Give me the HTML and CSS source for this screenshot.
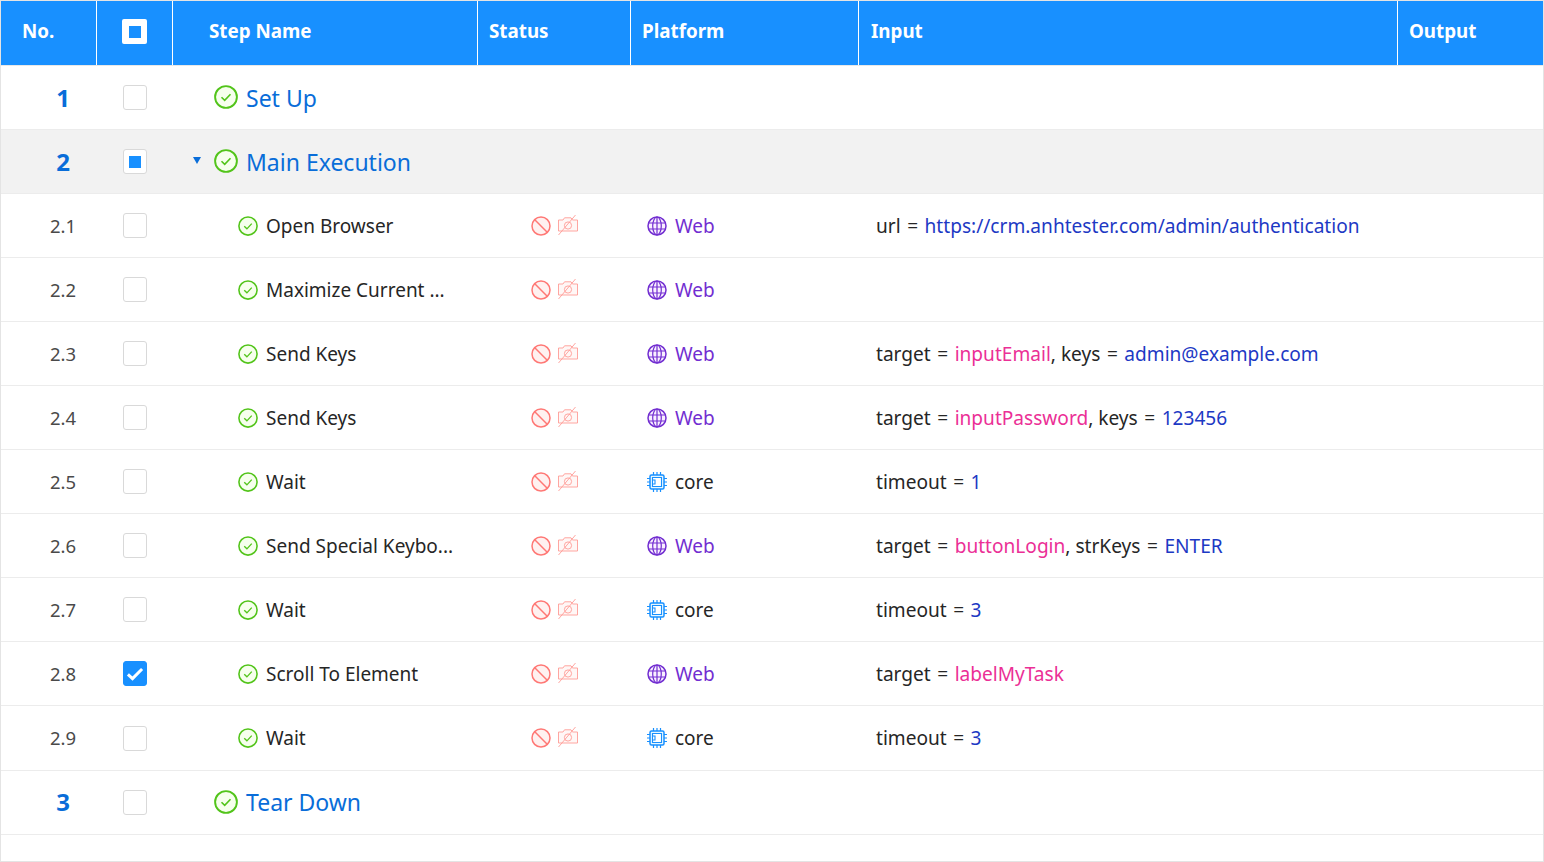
FILE: index.html
```html
<!DOCTYPE html>
<html lang="en">
<head>
<meta charset="utf-8">
<title>Steps</title>
<link rel="stylesheet" href="styles.css">
</head>
<body>
<svg class="defs" width="0" height="0" aria-hidden="true">
  <symbol id="ok" viewBox="0 0 24 24"><circle cx="12" cy="12" r="10.9" fill="#f6ffed" stroke="#52c41a" stroke-width="1.9"/><path d="M7.500 12.200l3.200 3.200 5.800-6.200" fill="none" stroke="#52c41a" stroke-width="1.600"/></symbol>
  <symbol id="ban" viewBox="0 0 20 20"><circle cx="10" cy="10" r="9" fill="#fff1f0" stroke="#ff7875" stroke-width="1.500"/><path d="M3.800 3.800l12.400 12.400" stroke="#ff7875" stroke-width="1.500"/></symbol>
  <symbol id="cam" viewBox="0 0 20 20" fill="none" stroke="#ff9c96" stroke-width=".9"><path d="M.5 5h4.500l1.500-2.200h6.500L14.500 5h5v11H.5z" fill="#fff7f6"/><circle cx="10" cy="10.500" r="3.600"/><path d="M17.500 0L.5 20"/></symbol>
  <symbol id="globe" viewBox="0 0 20 20" fill="none" stroke="#722ed1" stroke-width="1.200"><circle cx="10" cy="10" r="9" fill="#f9f0ff" stroke-width="1.500"/><ellipse cx="10" cy="10" rx="4.300" ry="9"/><path d="M10 1v18M1.500 7h17M1.500 13h17"/></symbol>
  <symbol id="chip" viewBox="0 0 20 20" fill="none" stroke="#1890ff"><rect x="3" y="3" width="14" height="14" rx="1.500" fill="#e6f7ff" stroke-width="1.500"/><path d="M5.500 5.500h9v9h-9zM5.500 8h2.500v4H5.500" fill="#fff" stroke-width="1.100"/><path d="M6.500 0v3M10 0v3M13.500 0v3M6.500 17v3M10 17v3M13.500 17v3M0 6.500h3M0 10h3M0 13.500h3M17 6.500h3M17 10h3M17 13.500h3" stroke-width="1.200"/></symbol>
</svg>
<main class="table">
  <div class="row head">
    <div class="c no">No.</div>
    <div class="c sel"><span class="hbox"><i></i></span></div>
    <div class="c name">Step Name</div>
    <div class="c status">Status</div>
    <div class="c plat">Platform</div>
    <div class="c input">Input</div>
    <div class="c output">Output</div>
  </div>

  <div class="row group">
    <div class="c no">1</div>
    <div class="c sel"><span class="box"></span></div>
    <div class="c name"><svg class="ok-lg"><use href="#ok"/></svg><span class="label">Set Up</span></div>
    <div class="c status"></div><div class="c plat"></div><div class="c input"></div><div class="c output"></div>
  </div>

  <div class="row group active">
    <div class="c no">2</div>
    <div class="c sel"><span class="box part"><i></i></span></div>
    <div class="c name"><span class="caret"></span><svg class="ok-lg"><use href="#ok"/></svg><span class="label">Main Execution</span></div>
    <div class="c status"></div><div class="c plat"></div><div class="c input"></div><div class="c output"></div>
  </div>

  <div class="row step">
    <div class="c no">2.1</div>
    <div class="c sel"><span class="box"></span></div>
    <div class="c name"><svg class="ok-sm"><use href="#ok"/></svg><span>Open Browser</span></div>
    <div class="c status"><svg class="ban"><use href="#ban"/></svg><svg class="cam"><use href="#cam"/></svg></div>
    <div class="c plat"><svg class="pi"><use href="#globe"/></svg><span class="web">Web</span></div>
    <div class="c input">url<span class="eq">=</span><span class="val">https://crm.anhtester.com/admin/authentication</span></div>
    <div class="c output"></div>
  </div>

  <div class="row step">
    <div class="c no">2.2</div>
    <div class="c sel"><span class="box"></span></div>
    <div class="c name"><svg class="ok-sm"><use href="#ok"/></svg><span>Maximize Current ...</span></div>
    <div class="c status"><svg class="ban"><use href="#ban"/></svg><svg class="cam"><use href="#cam"/></svg></div>
    <div class="c plat"><svg class="pi"><use href="#globe"/></svg><span class="web">Web</span></div>
    <div class="c input"></div>
    <div class="c output"></div>
  </div>

  <div class="row step">
    <div class="c no">2.3</div>
    <div class="c sel"><span class="box"></span></div>
    <div class="c name"><svg class="ok-sm"><use href="#ok"/></svg><span>Send Keys</span></div>
    <div class="c status"><svg class="ban"><use href="#ban"/></svg><svg class="cam"><use href="#cam"/></svg></div>
    <div class="c plat"><svg class="pi"><use href="#globe"/></svg><span class="web">Web</span></div>
    <div class="c input">target<span class="eq">=</span><span class="ref">inputEmail</span>,&nbsp;keys<span class="eq">=</span><span class="val">admin@example.com</span></div>
    <div class="c output"></div>
  </div>

  <div class="row step">
    <div class="c no">2.4</div>
    <div class="c sel"><span class="box"></span></div>
    <div class="c name"><svg class="ok-sm"><use href="#ok"/></svg><span>Send Keys</span></div>
    <div class="c status"><svg class="ban"><use href="#ban"/></svg><svg class="cam"><use href="#cam"/></svg></div>
    <div class="c plat"><svg class="pi"><use href="#globe"/></svg><span class="web">Web</span></div>
    <div class="c input">target<span class="eq">=</span><span class="ref">inputPassword</span>,&nbsp;keys<span class="eq">=</span><span class="val">123456</span></div>
    <div class="c output"></div>
  </div>

  <div class="row step">
    <div class="c no">2.5</div>
    <div class="c sel"><span class="box"></span></div>
    <div class="c name"><svg class="ok-sm"><use href="#ok"/></svg><span>Wait</span></div>
    <div class="c status"><svg class="ban"><use href="#ban"/></svg><svg class="cam"><use href="#cam"/></svg></div>
    <div class="c plat"><svg class="pi"><use href="#chip"/></svg><span>core</span></div>
    <div class="c input">timeout<span class="eq">=</span><span class="val">1</span></div>
    <div class="c output"></div>
  </div>

  <div class="row step">
    <div class="c no">2.6</div>
    <div class="c sel"><span class="box"></span></div>
    <div class="c name"><svg class="ok-sm"><use href="#ok"/></svg><span>Send Special Keybo...</span></div>
    <div class="c status"><svg class="ban"><use href="#ban"/></svg><svg class="cam"><use href="#cam"/></svg></div>
    <div class="c plat"><svg class="pi"><use href="#globe"/></svg><span class="web">Web</span></div>
    <div class="c input">target<span class="eq">=</span><span class="ref">buttonLogin</span>,&nbsp;strKeys<span class="eq">=</span><span class="val">ENTER</span></div>
    <div class="c output"></div>
  </div>

  <div class="row step">
    <div class="c no">2.7</div>
    <div class="c sel"><span class="box"></span></div>
    <div class="c name"><svg class="ok-sm"><use href="#ok"/></svg><span>Wait</span></div>
    <div class="c status"><svg class="ban"><use href="#ban"/></svg><svg class="cam"><use href="#cam"/></svg></div>
    <div class="c plat"><svg class="pi"><use href="#chip"/></svg><span>core</span></div>
    <div class="c input">timeout<span class="eq">=</span><span class="val">3</span></div>
    <div class="c output"></div>
  </div>

  <div class="row step">
    <div class="c no">2.8</div>
    <div class="c sel"><span class="box on"><svg viewBox="0 0 24 24"><path d="M3.500 12.500l5.500 5 11.500-11.500" fill="none" stroke="#fff" stroke-width="3.600"/></svg></span></div>
    <div class="c name"><svg class="ok-sm"><use href="#ok"/></svg><span>Scroll To Element</span></div>
    <div class="c status"><svg class="ban"><use href="#ban"/></svg><svg class="cam"><use href="#cam"/></svg></div>
    <div class="c plat"><svg class="pi"><use href="#globe"/></svg><span class="web">Web</span></div>
    <div class="c input">target<span class="eq">=</span><span class="ref">labelMyTask</span></div>
    <div class="c output"></div>
  </div>

  <div class="row step tall">
    <div class="c no">2.9</div>
    <div class="c sel"><span class="box"></span></div>
    <div class="c name"><svg class="ok-sm"><use href="#ok"/></svg><span>Wait</span></div>
    <div class="c status"><svg class="ban"><use href="#ban"/></svg><svg class="cam"><use href="#cam"/></svg></div>
    <div class="c plat"><svg class="pi"><use href="#chip"/></svg><span>core</span></div>
    <div class="c input">timeout<span class="eq">=</span><span class="val">3</span></div>
    <div class="c output"></div>
  </div>

  <div class="row group last">
    <div class="c no">3</div>
    <div class="c sel"><span class="box"></span></div>
    <div class="c name"><svg class="ok-lg"><use href="#ok"/></svg><span class="label">Tear Down</span></div>
    <div class="c status"></div><div class="c plat"></div><div class="c input"></div><div class="c output"></div>
  </div>
</main>
</body>
</html>
```

FILE: styles.css
```css
* { box-sizing: border-box; }
html, body { margin: 0; padding: 0; height: 100%; overflow: hidden; background: #fff; }
.defs { display: block; height: 0; }
.table {
  height: 862px;
  border: 1px solid #e4e4e4;
  font-family: "Noto Sans", "Open Sans", sans-serif;
  font-size: 19px;
  color: #262626;
}
.row {
  display: grid;
  grid-template-columns: 96px 76px 305px 153px 228px 539px 1fr;
  height: 64px;
  border-bottom: 1px solid #ececec;
}
.head { height: 65px; }
.tall { height: 65px; }
.c { display: flex; align-items: center; min-width: 0; white-space: nowrap; }
.no { justify-content: center; padding-left: 28px; }
.sel { justify-content: center; padding-right: 1px; }
.head { background: #1890ff; color: #fff; font-weight: 700; font-size: 18.800px; border-bottom-color: #e8e8e8; }
.head .c { border-right: 1px solid #fff; padding-bottom: 5px; }
.head .c:last-child { border-right: 0; }
.head .no { justify-content: flex-start; padding-left: 21px; }
.head .name { padding-left: 36px; }
.head .status { padding-left: 11px; }
.head .plat { padding-left: 11px; }
.head .input { padding-left: 12px; }
.head .output { padding-left: 11px; }
.hbox { width: 25px; height: 25px; background: #fff; border-radius: 2px; display: flex; align-items: center; justify-content: center; margin: 2px 0 0 1px; }
.hbox i { width: 12px; height: 12px; background: #1890ff; }
.box { width: 24px; height: 25px; background: #fff; border: 1px solid #d9d9d9; border-radius: 3px; display: flex; align-items: center; justify-content: center; margin-left: 1px; }
.box.part i { width: 12px; height: 12px; background: #1890ff; }
.box.on { background: #1890ff; border-color: #1890ff; }
.box.on svg { width: 20px; height: 20px; }
.group { color: #096dd9; font-size: 23px; }
.group .no { font-weight: 700; font-size: 24px; }
.group .name { padding-left: 41px; position: relative; }
.active { background: #f2f2f2; }
.caret {
  position: absolute; left: 20px; top: 27px;
  border-left: 4px solid transparent; border-right: 4px solid transparent; border-top: 7px solid #096dd9;
}
.ok-lg { width: 24px; height: 24px; margin-right: 8px; margin-bottom: 2px; flex: none; }
.ok-sm { width: 20px; height: 20px; margin-right: 8px; flex: none; }
.step .no { color: #4a4a4a; font-size: 18.500px; }
.tall .no { padding-bottom: 1px; }
.last .no { padding-bottom: 2px; }
.last .label { margin-bottom: 2px; }
.step .name { padding-left: 65px; }
.step .status { padding-left: 53px; }
.ban { width: 20px; height: 20px; flex: none; }
.cam { width: 22px; height: 20px; margin-left: 6px; margin-top: -2px; flex: none; }
.step .plat { padding-left: 16px; }
.pi { width: 20px; height: 20px; margin-right: 8px; flex: none; }
.web { color: #722ed1; }
.step .input { padding-left: 17px; font-size: 19.100px; }
.eq { margin: 0 6.500px; }
.ref { color: #eb2f96; }
.val { color: #1d39c4; }
```
